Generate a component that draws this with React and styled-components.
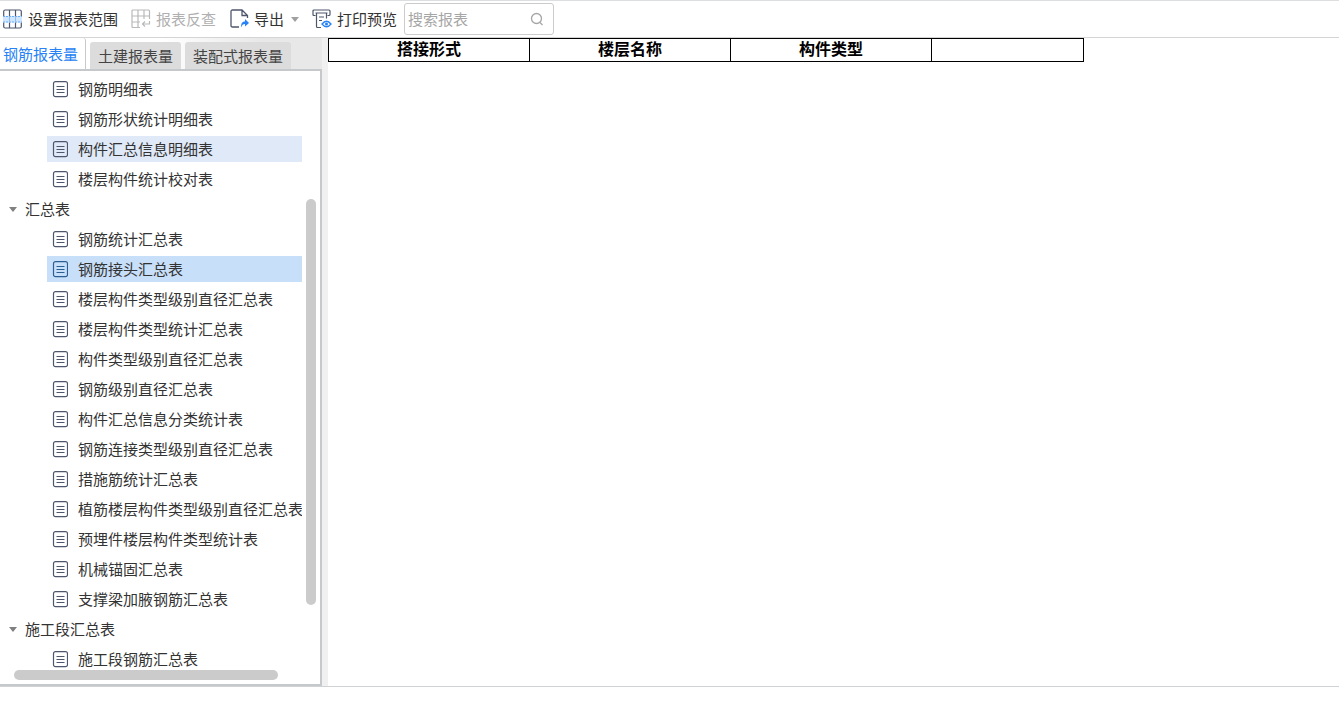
import React, { useState } from 'react';
import styled, { createGlobalStyle } from 'styled-components';

const tabs = ['钢筋报表量', '土建报表量', '装配式报表量'];

const groups = [
  {
    title: '',
    items: ['钢筋明细表', '钢筋形状统计明细表', '构件汇总信息明细表', '楼层构件统计校对表'],
  },
  {
    title: '汇总表',
    items: [
      '钢筋统计汇总表',
      '钢筋接头汇总表',
      '楼层构件类型级别直径汇总表',
      '楼层构件类型统计汇总表',
      '构件类型级别直径汇总表',
      '钢筋级别直径汇总表',
      '构件汇总信息分类统计表',
      '钢筋连接类型级别直径汇总表',
      '措施筋统计汇总表',
      '植筋楼层构件类型级别直径汇总表',
      '预埋件楼层构件类型统计表',
      '机械锚固汇总表',
      '支撑梁加腋钢筋汇总表',
    ],
  },
  { title: '施工段汇总表', items: ['施工段钢筋汇总表'] },
];

const columns = ['搭接形式', '楼层名称', '构件类型', ''];

const RangeIcon = () => (
  <svg width="20" height="20" viewBox="0 0 20 20" fill="none" aria-hidden="true">
    <rect x="0.700" y="1" width="17.600" height="18" rx="1.500" stroke="#4d566b" strokeWidth="1.200" />
    <path d="M6.500 1V19M12.500 1V19" stroke="#4d566b" strokeWidth="1.200" />
    <rect x="0" y="7" width="19" height="6.500" fill="#cfe4fd" />
    <path d="M0 7.500H19M0 13H19" stroke="#6fadf7" strokeWidth="1" strokeDasharray="2 1" />
    <path d="M6.500 8V13M12.500 8V13" stroke="#8abcf8" strokeWidth="1" />
  </svg>
);

const CheckIcon = () => (
  <svg width="20" height="20" viewBox="0 0 20 20" fill="none" stroke="#b9b9b9" strokeWidth="1.200" aria-hidden="true">
    <path d="M9 18.500H2Q1 18.500 1 17.500V2Q1 1 2 1H17.500Q18.500 1 18.500 2V10M1 7H18.500M1 13H9M7 1V18.500M13 1V10M18.500 12V15H11.500M14 12.500L11.500 15L14 17.500" />
  </svg>
);

const ExportIcon = () => (
  <svg width="20" height="20" viewBox="0 0 20 20" fill="none" aria-hidden="true">
    <path d="M10 18H3.500Q2 18 2 16.500V2.500Q2 1 3.500 1H13L18.500 6.500V9M13 1V6.500H18.500" stroke="#4d566b" strokeWidth="1.300" />
    <path d="M12 18.500C12 14 13.500 12.500 16 12.500V10L20 14L16 17.500V15C14 15 13 16 12 18.500Z" fill="#2682f5" />
  </svg>
);

const PreviewIcon = () => (
  <svg width="20" height="20" viewBox="0 0 20 20" fill="none" aria-hidden="true">
    <path d="M3.500 6.500H2Q1 6.500 1 5.500V2Q1 1 2 1H17Q18 1 18 2V5.500Q18 6.500 17 6.500H15.500M3.500 4H15.500M4.500 4V17.500Q4.500 18.500 5.500 18.500H9M14.500 4V9.500M7 8H12M7 11.500H10" stroke="#4d566b" strokeWidth="1.200" />
    <path d="M10 15Q14.500 9.500 19 15Q14.500 20.500 10 15Z" stroke="#2682f5" strokeWidth="1.300" />
    <circle cx="14.500" cy="15" r="1.500" fill="#2682f5" />
  </svg>
);

const ReportIcon = () => (
  <svg width="16" height="17" viewBox="0 0 16 17" fill="none" stroke="currentColor" aria-hidden="true">
    <rect x="1.500" y="0.700" width="14" height="15" rx="2" strokeWidth="1.200" />
    <path d="M4.500 5.500H12.500M4.500 8.500H12.500M4.500 11.500H12.500" strokeWidth="1" />
  </svg>
);

const SearchIcon = () => (
  <svg width="14" height="14" viewBox="0 0 14 14" fill="none" stroke="#a6a6a6" strokeWidth="1.300" aria-hidden="true">
    <circle cx="6.500" cy="6.500" r="5" />
    <path d="M10 10.500L12.500 13" />
  </svg>
);

function App() {
  const [tab, setTab] = useState(tabs[0]);
  const [selected, setSelected] = useState('钢筋接头汇总表');
  const hovered = '构件汇总信息明细表';

  return (
    <Page>
      <GlobalStyle />
      <Toolbar>
        <ToolButton><RangeIcon />设置报表范围</ToolButton>
        <ToolButton disabled><CheckIcon />报表反查</ToolButton>
        <ToolButton><ExportIcon />导出<Caret $light /></ToolButton>
        <ToolButton><PreviewIcon />打印预览</ToolButton>
        <SearchBox>
          <input type="text" name="search" aria-label="搜索报表" placeholder="搜索报表" />
          <SearchIcon />
        </SearchBox>
      </Toolbar>
      <Content>
        <Sidebar>
          <Tabs>
            {tabs.map((name) => (
              <Tab key={name} $active={name === tab} onClick={() => setTab(name)}>{name}</Tab>
            ))}
          </Tabs>
          <Tree>
            {groups.map((group) => (
              <Group key={group.title}>
                {group.title && <GroupTitle><Caret />{group.title}</GroupTitle>}
                {group.items.map((item) => (
                  <Item
                    key={item}
                    $selected={item === selected}
                    $hovered={item === hovered}
                    onClick={() => setSelected(item)}
                  >
                    <ReportIcon />
                    <span>{item}</span>
                  </Item>
                ))}
              </Group>
            ))}
            <VerticalThumb />
            <HorizontalThumb />
          </Tree>
        </Sidebar>
        <Report>
          <Table>
            <colgroup>
              <col width="201" />
              <col width="201" />
              <col width="201" />
              <col width="152" />
            </colgroup>
            <thead>
              <tr>
                {columns.map((name) => <th key={name}>{name}</th>)}
              </tr>
            </thead>
          </Table>
        </Report>
      </Content>
    </Page>
  );
}

const GlobalStyle = createGlobalStyle`
* {
    box-sizing:border-box;
}
body {
    margin:0;
    background-color:#fff;
}
body, button, input {
    font-family:'Noto Sans CJK SC', sans-serif;
    font-size:15px;
    line-height:20px;
    color:#333;
}
button {
    padding:0;
    border:none;
    background:none;
    white-space:nowrap;
}
svg {
    flex:none;
}
`

const Page = styled.div`
display:flex;
flex-direction:column;
`

const Toolbar = styled.header`
display:flex;
align-items:center;
gap:13px;
height:38px;
padding:0 3px;
border-top:1px solid #dcdee0;
border-bottom:1px solid #d4d4d4;
`

const ToolButton = styled.button`
display:flex;
align-items:center;
gap:5px;
&:disabled{
    color:#b0b0b0;
}
`

const Caret = styled.i`
flex:none;
margin-left:${(props) => (props.$light ? '2px' : '0')};
border-top:5px solid ${(props) => (props.$light ? '#a0a0a0' : '#808080')};
border-left:4px solid transparent;
border-right:4px solid transparent;
`

const SearchBox = styled.label`
display:flex;
align-items:center;
width:150px;
height:32px;
margin-left:-6px;
padding:0 9px 0 3px;
border:1px solid #ccc;
border-radius:3px;
input{
    flex:1;
    min-width:0;
    padding:0;
    border:none;
    outline:none;
    background:none;
}
input::placeholder{
    color:#a6a6a6;
    opacity:1;
}
`

const Content = styled.main`
display:flex;
border-bottom:1px solid #d0d3d6;
`

const Sidebar = styled.aside`
display:flex;
flex-direction:column;
flex:none;
width:328px;
border-right:6px solid #f0f0f0;
`

const Tabs = styled.nav`
display:flex;
align-items:flex-end;
gap:4px;
height:31px;
background-image:linear-gradient(100deg, #fff 50%, #e8e8e8 80%);
`

const Tab = styled.button`
height:${(props) => (props.$active ? '31px' : '27px')};
padding:${(props) => (props.$active ? '0 7px 0 3px' : '0 8px')};
border-right:${(props) => (props.$active ? '1px solid #c6c9cc' : 'none')};
border-radius:3px 3px 0 0;
background-color:${(props) => (props.$active ? '#fff' : '#dcdcdc')};
color:${(props) => (props.$active ? '#2682f5' : '#444')};
`

const Tree = styled.div`
position:relative;
padding:3px 18px 10px 0;
border-top:2px solid #c6c9cc;
border-right:2px solid #c6c9cc;
border-bottom:2px solid #c6c9cc;
`

const Group = styled.section`
display:flex;
flex-direction:column;
`

const GroupTitle = styled.div`
display:flex;
align-items:center;
gap:8px;
height:30px;
padding-left:9px;
`

const Item = styled.button`
display:flex;
align-items:center;
gap:10px;
height:26px;
margin:2px 0 2px 47px;
padding-left:5px;
overflow:hidden;
color:${(props) => (props.$selected ? '#2b5f94' : '#4d566b')};
background-color:${(props) => (props.$selected ? '#c8dff9' : props.$hovered ? '#dfe9f8' : 'transparent')};
span{
    color:#333;
}
`

// overlay scrollbars
const VerticalThumb = styled.div`
position:absolute;
top:128px;
right:4px;
width:10px;
height:406px;
border-radius:5px;
background-color:#cbcbcb;
`

const HorizontalThumb = styled.div`
position:absolute;
left:14px;
bottom:4px;
width:264px;
height:10px;
border-radius:5px;
background-color:#cbcbcb;
`

const Report = styled.section`
flex:1;
min-width:0;
`

const Table = styled.table`
table-layout:fixed;
width:755px;
border-collapse:collapse;
th{
    height:23px;
    padding:0 0 4px;
    border:1px solid #000;
    color:#000;
    font-size:16px;
    font-weight:bold;
    line-height:18px;
}
`

export default App
